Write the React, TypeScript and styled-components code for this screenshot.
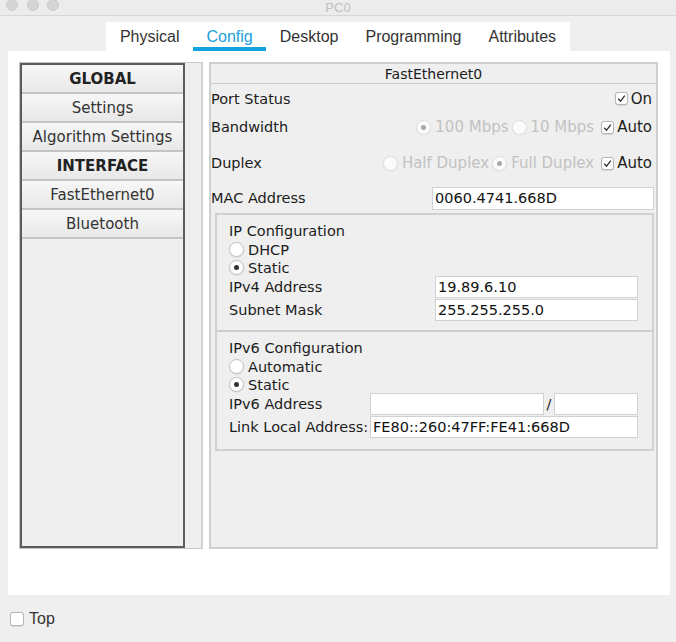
import React from "react";
import styled, { createGlobalStyle } from "styled-components";

const GlobalStyle = createGlobalStyle`
  html, body { margin: 0; padding: 0; background: #efefef; }
  body { width: 676px; height: 642px; overflow: hidden; }
  * { box-sizing: border-box; }
`;

const Window = styled.div`
  width: 676px;
  height: 642px;
  background: #efefef;
  display: flex;
  flex-direction: column;
  font-family: "DejaVu Sans", "Liberation Sans", sans-serif;
  font-size: 14.5px;
  color: #1c1c1c;
`;

const TitleBar = styled.div`
  height: 16px;
  border-bottom: 1px solid #d6d6d6;
  background: #ececec;
  display: grid;
  grid-template-columns: 1fr auto 1fr;
  align-items: start;
`;

const Lights = styled.div`
  display: flex;
  gap: 8.5px;
  padding-left: 6px;
  margin-top: -1px;
`;

const Light = styled.span`
  width: 12px;
  height: 12px;
  border-radius: 50%;
  background: #d5d5d5;
  border: 1px solid #cacaca;
`;

const Title = styled.div`
  font-family: "Liberation Sans", Arial, sans-serif;
  font-size: 13px;
  line-height: 15px;
  color: #c0c0c0;
`;

const TabStrip = styled.div`
  align-self: center;
  margin-top: 6px;
  height: 29px;
  background: #ffffff;
  display: flex;
`;

const Tab = styled.div<{ $active?: boolean }>`
  height: 29px;
  padding: 4px 13.5px 0;
  display: flex;
  align-items: center;
  font-family: "Liberation Sans", Arial, sans-serif;
  font-size: 16px;
  color: ${(p) => (p.$active ? "#1ba2dc" : "#333333")};
  border-bottom: 4px solid ${(p) => (p.$active ? "#12a4df" : "transparent")};
`;

const Content = styled.div`
  margin: 0 6px 0 8px;
  height: 544px;
  background: #ffffff;
  padding: 11px 12px 0 11px;
  display: flex;
  gap: 6px;
  align-items: flex-start;
`;

const Sidebar = styled.div`
  width: 184px;
  height: 487px;
  border: 1px solid #c6c6c6;
  border-right: 2px solid #d2d2d2;
  background: #efefef;
  display: flex;
`;

const NavList = styled.div`
  width: 165px;
  height: 100%;
  border: 2px solid #5c5c5c;
  background: #efefef;
  display: flex;
  flex-direction: column;
`;

const NavItem = styled.div<{ $bold?: boolean }>`
  height: 29px;
  border-bottom: 2px solid #c4c4c4;
  background: linear-gradient(#f7f7f7, #e8e8e8);
  display: flex;
  align-items: center;
  justify-content: center;
  font-size: 15px;
  white-space: nowrap;
  color: ${(p) => (p.$bold ? "#222222" : "#333333")};
  font-weight: ${(p) => (p.$bold ? 700 : 400)};
`;

const Panel = styled.div`
  width: 449px;
  height: 487px;
  border: 2px solid #d0d0d0;
  background: #efefef;
  display: flex;
  flex-direction: column;
`;

const PanelHeader = styled.div`
  height: 20px;
  border-bottom: 1px solid #c9c9c9;
  display: flex;
  align-items: center;
  justify-content: center;
  color: #1c1c1c;
  font-size: 14px;
`;

const FieldRow = styled.div<{ $h: number; $pr?: number }>`
  height: ${(p) => p.$h}px;
  padding: 0 ${(p) => p.$pr ?? 4}px 0 0;
  display: flex;
  align-items: center;
  justify-content: space-between;
`;

const Controls = styled.div`
  display: flex;
  align-items: center;
  font-size: 15px;
`;

const Option = styled.div<{ $disabled?: boolean; $gap?: number; $inner?: number }>`
  display: flex;
  align-items: center;
  gap: ${(p) => p.$inner ?? 4}px;
  margin-left: ${(p) => p.$gap ?? 0}px;
  color: ${(p) => (p.$disabled ? "#c2c2c2" : "#1c1c1c")};
`;

const RadioCircle = styled.span<{ $on?: boolean; $disabled?: boolean }>`
  width: 15px;
  height: 15px;
  border-radius: 50%;
  background: ${(p) => (p.$disabled ? "#fbfbfb" : "#ffffff")};
  border: 1px solid ${(p) => (p.$disabled ? "#dedede" : "#c2c2c2")};
  box-shadow: 0 0.5px 1px rgba(0, 0, 0, ${(p) => (p.$disabled ? 0.05 : 0.12)});
  display: flex;
  align-items: center;
  justify-content: center;
  flex: none;
  &::after {
    content: "";
    display: ${(p) => (p.$on ? "block" : "none")};
    width: 5px;
    height: 5px;
    border-radius: 50%;
    background: ${(p) => (p.$disabled ? "#a8a8a8" : "#333333")};
  }
`;

const CheckBox = styled.span<{ $size?: number }>`
  width: ${(p) => p.$size ?? 13}px;
  height: ${(p) => p.$size ?? 13}px;
  border-radius: 3px;
  background: #ffffff;
  border: 1px solid #b6b6b6;
  box-shadow: 0 0.5px 1px rgba(0, 0, 0, 0.1);
  display: flex;
  align-items: center;
  justify-content: center;
  flex: none;
`;

const TextField = styled.div<{ $w?: number; $h?: number }>`
  width: ${(p) => (p.$w ? `${p.$w}px` : "100%")};
  height: ${(p) => p.$h ?? 22}px;
  background: #ffffff;
  border: 1px solid #d2d2d2;
  padding-left: 2px;
  display: flex;
  align-items: center;
  color: #111111;
  white-space: nowrap;
  overflow: hidden;
`;

const GroupBox = styled.div`
  margin: 2px 2px 0 4px;
  border: 2px solid #d0d0d0;
  display: flex;
  flex-direction: column;
`;

const Section = styled.div<{ $pb: number; $divider?: boolean }>`
  padding: 6px 13px ${(p) => p.$pb}px 12px;
  border-bottom: ${(p) => (p.$divider ? "2px solid #cdcdcd" : "none")};
  display: flex;
  flex-direction: column;
`;

const Line = styled.div<{ $h: number }>`
  height: ${(p) => p.$h}px;
  display: flex;
  align-items: center;
`;

const FieldGrid = styled.div<{ $cols: string; $rows: string; $gap: number }>`
  display: grid;
  grid-template-columns: ${(p) => p.$cols};
  grid-template-rows: ${(p) => p.$rows};
  row-gap: ${(p) => p.$gap}px;
  align-items: center;
  white-space: nowrap;
`;

const Slash = styled.span`
  text-align: center;
`;

const Span3 = styled.div`
  grid-column: 2 / span 3;
`;

const Footer = styled.div`
  flex: 1;
  display: flex;
  align-items: center;
  gap: 5px;
  padding-left: 10px;
  font-family: "Liberation Sans", Arial, sans-serif;
  font-size: 16px;
  color: #333333;
`;

const Check = () => (
  <svg width="9" height="9" viewBox="0 0 9 9">
    <path d="M1.2 4.8 L3.5 7.2 L7.8 1.6" fill="none" stroke="#333" strokeWidth="1.3" />
  </svg>
);

const Radio = ({ label, on, disabled, gap }: { label: string; on?: boolean; disabled?: boolean; gap?: number }) => (
  <Option $disabled={disabled} $gap={gap}>
    <RadioCircle $on={on} $disabled={disabled} />
    {label}
  </Option>
);

const CheckOption = ({ label, gap }: { label: string; gap?: number }) => (
  <Option $gap={gap} $inner={3}>
    <CheckBox>
      <Check />
    </CheckBox>
    {label}
  </Option>
);

export default function App() {
  return (
    <>
      <GlobalStyle />
      <Window>
        <TitleBar>
          <Lights>
            <Light />
            <Light />
            <Light />
          </Lights>
          <Title>PC0</Title>
          <div />
        </TitleBar>
        <TabStrip>
          <Tab>Physical</Tab>
          <Tab $active>Config</Tab>
          <Tab>Desktop</Tab>
          <Tab>Programming</Tab>
          <Tab>Attributes</Tab>
        </TabStrip>
        <Content>
          <Sidebar>
            <NavList>
              <NavItem $bold>GLOBAL</NavItem>
              <NavItem>Settings</NavItem>
              <NavItem>Algorithm Settings</NavItem>
              <NavItem $bold>INTERFACE</NavItem>
              <NavItem>FastEthernet0</NavItem>
              <NavItem>Bluetooth</NavItem>
            </NavList>
          </Sidebar>
          <Panel>
            <PanelHeader>FastEthernet0</PanelHeader>
            <FieldRow $h={29}>
              <span>Port Status</span>
              <Controls>
                <CheckOption label="On" />
              </Controls>
            </FieldRow>
            <FieldRow $h={28}>
              <span>Bandwidth</span>
              <Controls>
                <Radio label="100 Mbps" on disabled />
                <Radio label="10 Mbps" disabled gap={3} />
                <CheckOption label="Auto" gap={7} />
              </Controls>
            </FieldRow>
            <FieldRow $h={44}>
              <span>Duplex</span>
              <Controls>
                <Radio label="Half Duplex" disabled />
                <Radio label="Full Duplex" on disabled gap={3} />
                <CheckOption label="Auto" gap={7} />
              </Controls>
            </FieldRow>
            <FieldRow $h={26} $pr={2}>
              <span>MAC Address</span>
              <TextField $w={222} $h={23}>0060.4741.668D</TextField>
            </FieldRow>
            <GroupBox>
              <Section $pb={10} $divider>
                <Line $h={19}>IP Configuration</Line>
                <Line $h={19}>
                  <Radio label="DHCP" />
                </Line>
                <Line $h={17}>
                  <Radio label="Static" on />
                </Line>
                <FieldGrid $cols="206px 203px" $rows="22px 21px" $gap={1}>
                  <span>IPv4 Address</span>
                  <TextField>19.89.6.10</TextField>
                  <span>Subnet Mask</span>
                  <TextField>255.255.255.0</TextField>
                </FieldGrid>
              </Section>
              <Section $pb={12}>
                <Line $h={19}>IPv6 Configuration</Line>
                <Line $h={19}>
                  <Radio label="Automatic" />
                </Line>
                <Line $h={17}>
                  <Radio label="Static" on />
                </Line>
                <FieldGrid $cols="141px 174px 10px 84px" $rows="21px 21px" $gap={2}>
                  <span>IPv6 Address</span>
                  <TextField />
                  <Slash>/</Slash>
                  <TextField />
                  <span>Link Local Address:</span>
                  <Span3>
                    <TextField>FE80::260:47FF:FE41:668D</TextField>
                  </Span3>
                </FieldGrid>
              </Section>
            </GroupBox>
          </Panel>
        </Content>
        <Footer>
          <CheckBox $size={14} />
          Top
        </Footer>
      </Window>
    </>
  );
}
